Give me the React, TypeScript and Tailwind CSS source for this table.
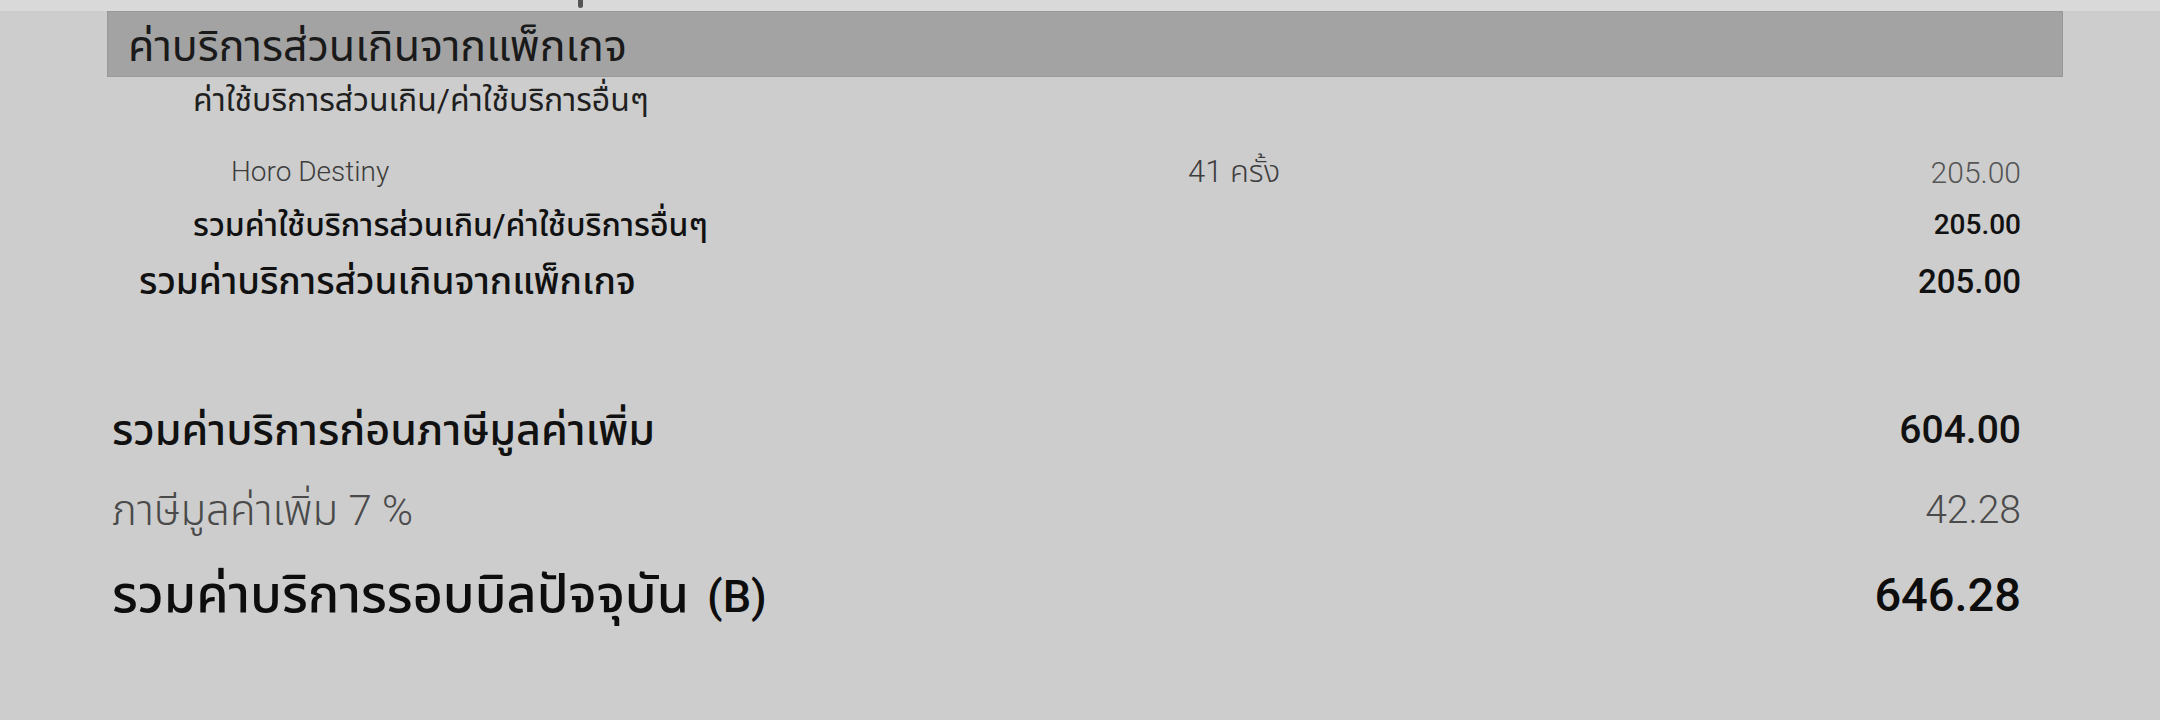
import React from "react";

const font = "font-['Roboto','Noto_Sans','Noto_Sans_Thai',sans-serif]";

const Invoice: React.FC = () => {
  return (
    <div className={`min-h-screen w-full bg-[#cdcdcd] ${font}`}>
      {/* Strip above */}
      <div className="h-[11px] bg-[#d9d9d9] pl-[578px] overflow-hidden">
        <div className="h-[8px] w-[5px] rounded-b-full bg-[#555]"></div>
      </div>

      <div className="pl-[107px] pr-[97px]">
        {/* Section header */}
        <div className="h-[66px] bg-[#a3a3a3] border border-[#999] flex items-center pl-[20px] pt-[4px]">
          <span className="text-[43px] text-[#1a1a1a] leading-none">ค่าบริการส่วนเกินจากแพ็กเกจ</span>
        </div>

        <div className="pr-[42px]">
          <div className="h-[46px] flex items-center pl-[86px] text-[32px] text-[#1f1f1f]">
            ค่าใช้บริการส่วนเกิน/ค่าใช้บริการอื่นๆ
          </div>

          <div className="mt-[27px] h-[44px] flex items-center text-[#3d3d3d] font-light">
            <span className="pl-[124px] w-[1081px] text-[28px]">Horo Destiny</span>
            <span className="flex-1 text-[31px]">41 ครั้ง</span>
            <span className="text-[30px] text-[#555]">205.00</span>
          </div>

          <div className="mt-[9px] h-[44px] flex items-center pl-[86px] text-[#111] font-medium">
            <span className="flex-1 text-[32px]">รวมค่าใช้บริการส่วนเกิน/ค่าใช้บริการอื่นๆ</span>
            <span className="text-[28px]">205.00</span>
          </div>

          <div className="mt-[11px] h-[48px] flex items-center pl-[32px] text-[#111] font-medium">
            <span className="flex-1 text-[37px]">รวมค่าบริการส่วนเกินจากแพ็กเกจ</span>
            <span className="text-[33px]">205.00</span>
          </div>

          <div className="mt-[98px] h-[52px] flex items-center pl-[5px] text-[#111] font-medium">
            <span className="flex-1 text-[43px]">รวมค่าบริการก่อนภาษีมูลค่าเพิ่ม</span>
            <span className="text-[39px]">604.00</span>
          </div>

          <div className="mt-[28px] h-[52px] flex items-center pl-[5px] text-[#4a4a4a] font-light">
            <span className="flex-1 text-[42px]">ภาษีมูลค่าเพิ่ม 7 %</span>
            <span className="text-[39px]">42.28</span>
          </div>

          <div className="mt-[29px] h-[60px] flex items-center pl-[5px] text-[#0d0d0d] font-medium">
            <span className="flex-1 flex items-baseline gap-[18px]">
              <span className="text-[52px]">รวมค่าบริการรอบบิลปัจจุบัน</span>
              <span className="text-[45px]">(B)</span>
            </span>
            <span className="text-[47px]">646.28</span>
          </div>
        </div>
      </div>
    </div>
  );
};

export default function App() {
  return <Invoice />;
}
